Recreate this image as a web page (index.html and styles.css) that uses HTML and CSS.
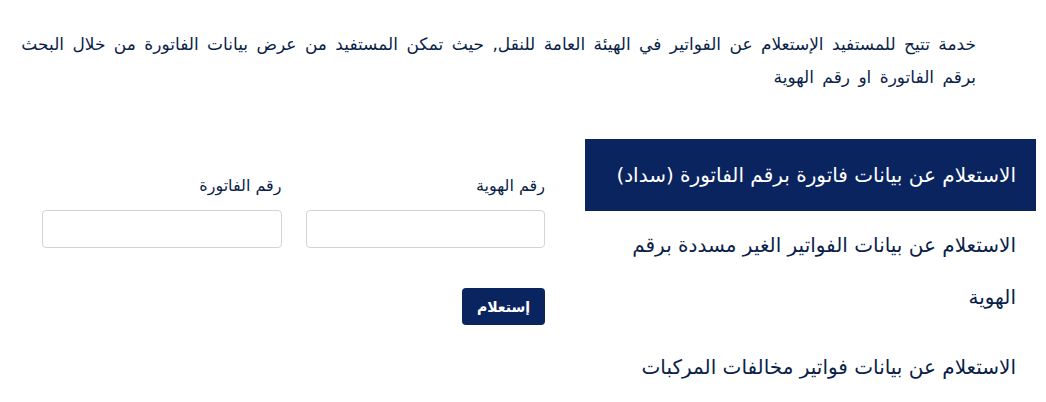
FILE: index.html
```html
<!DOCTYPE html>
<html lang="ar" dir="rtl">
<head>
<meta charset="utf-8">
<link rel="stylesheet" href="styles.css">
</head>
<body>
<div class="page">
  <p class="intro">خدمة تتيح للمستفيد الإستعلام عن الفواتير في الهيئة العامة للنقل, حيث تمكن المستفيد من عرض بيانات الفاتورة من خلال البحث برقم الفاتورة او رقم الهوية</p>
  <div class="main">
    <nav class="side">
      <a class="item active">الاستعلام عن بيانات فاتورة برقم الفاتورة (سداد)</a>
      <a class="item">الاستعلام عن بيانات الفواتير الغير مسددة برقم الهوية</a>
      <a class="item">الاستعلام عن بيانات فواتير مخالفات المركبات</a>
    </nav>
    <form class="form">
      <div class="fields">
        <label class="field"><span class="lbl">رقم الهوية</span><input class="inp" type="text"></label>
        <label class="field"><span class="lbl">رقم الفاتورة</span><input class="inp" type="text"></label>
      </div>
      <button class="btn" type="button">إستعلام</button>
    </form>
  </div>
</div>
</body>
</html>
```
FILE: styles.css
```css
* { box-sizing: border-box; }
body {
  margin: 0;
  background: #fff;
  font-family: "DejaVu Sans", sans-serif;
  color: #0b1f4a;
}
.page { padding: 0 10px; }
.intro {
  margin: 0;
  padding: 28px 60px 0 8px;
  font-size: 17px;
  word-spacing: 3px;
  line-height: 33px;
}
.main {
  display: flex;
  flex-direction: row;
  margin-top: 45px;
  gap: 40px;
}
.side {
  width: 451px;
  flex: none;
  display: flex;
  flex-direction: column;
}
.item {
  display: block;
  padding: 0 20px;
  font-size: 20px;
  line-height: 52px;
  color: #0b1f4a;
}
.item.active {
  background: #0a2460;
  color: #fff;
  padding: 10px 20px;
  margin-bottom: 8px;
}
.item + .item:not(.active) { margin-bottom: 18px; }
.form {
  width: 503px;
  display: flex;
  flex-direction: column;
  padding-top: 36px;
}
.fields {
  display: flex;
  gap: 24px;
}
.field {
  display: flex;
  flex-direction: column;
  width: 240px;
}
.lbl {
  font-size: 16px;
  line-height: 22px;
  margin-bottom: 13px;
}
.inp {
  height: 38px;
  border: 1px solid #d0d4da;
  border-radius: 4px;
  background: #fff;
}
.btn {
  margin-top: 40px;
  align-self: flex-start;
  width: 83px;
  height: 37px;
  background: #0a2460;
  color: #fff;
  border: none;
  border-radius: 4px;
  font-family: inherit;
  font-weight: bold;
  font-size: 14px;
}
```
